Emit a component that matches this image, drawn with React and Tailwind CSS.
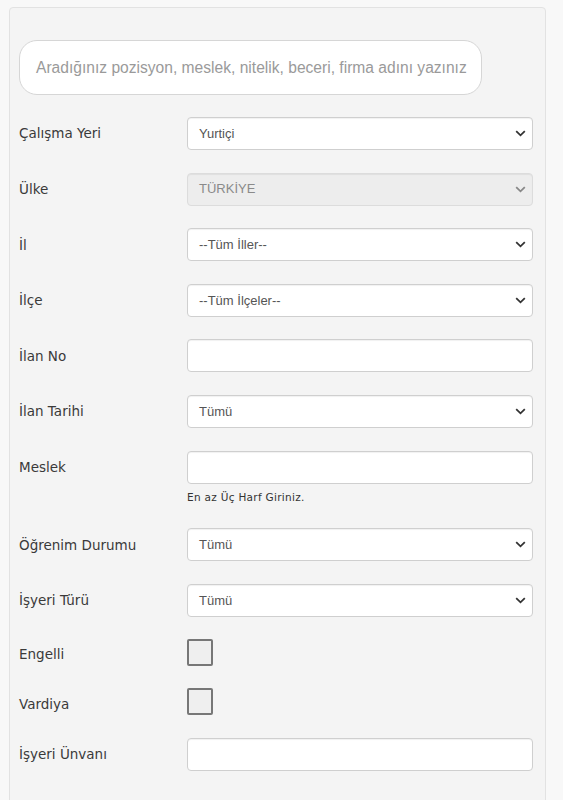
export default function App() {
  return (
    <div className="min-h-[800px] w-[563px] bg-[#f8f8f8] pl-[9px] pt-[7px] font-['Liberation_Sans',Arial,sans-serif]">
      <div className="w-[537px] min-h-[820px] rounded-t-[4px] border border-[#e2e2e2] bg-[#f4f4f4] pl-[9px] pr-[12px] pt-[32px]">
        <div className="flex h-[55px] w-[463px] items-center rounded-[18px] border border-[#d6d6d6] bg-white pl-[16px] text-[15.6px] text-[#9a9a9a]">
          Aradığınız pozisyon, meslek, nitelik, beceri, firma adını yazınız
        </div>

        <div className="mt-[22px] flex flex-col gap-[22.6px]">
          <Row label="Çalışma Yeri"><Select value="Yurtiçi" /></Row>
          <Row label="Ülke"><Select value="TÜRKİYE" disabled /></Row>
          <Row label="İl"><Select value="--Tüm İller--" /></Row>
          <Row label="İlçe"><Select value="--Tüm İlçeler--" /></Row>
          <Row label="İlan No"><TextBox /></Row>
          <Row label="İlan Tarihi"><Select value="Tümü" /></Row>
          <Row label="Meslek">
            <div>
              <TextBox />
              <p className="pt-[6px] pb-[2px] text-[10.5px] leading-[14px] tracking-[0.3px] text-[#333] font-['DejaVu_Sans',Verdana,sans-serif]">
                En az Üç Harf Giriniz.
              </p>
            </div>
          </Row>
          <Row label="Öğrenim Durumu"><Select value="Tümü" /></Row>
          <Row label="İşyeri Türü"><Select value="Tümü" /></Row>
          <Row label="Engelli" small><Check /></Row>
          <Row label="Vardiya" small><Check /></Row>
          <Row label="İşyeri Ünvanı"><TextBox /></Row>
        </div>
      </div>
    </div>
  );
}

function Row({ label, children, small }) {
  return (
    <div className="flex items-start">
      <div className={`flex w-[168px] shrink-0 items-center text-[13.5px] text-[#3a3a3a] font-['DejaVu_Sans',Verdana,sans-serif] ${small ? "h-[26.5px] pt-[4px]" : "h-[33px]"}`}>
        {label}
      </div>
      <div className="w-[346px]">{children}</div>
    </div>
  );
}

function Select({ value, disabled }) {
  return (
    <div
      className={`flex h-[33px] items-center justify-between rounded-[4px] border pl-[11px] pr-[6px] text-[13px] shadow-[inset_0_1px_1px_rgba(0,0,0,0.06)] ${
        disabled ? "border-[#dcdcdc] bg-[#ededed] text-[#8a8a8a]" : "border-[#cfcfcf] bg-white text-[#555]"
      }`}
    >
      <span>{value}</span>
      <svg width="11" height="7" viewBox="0 0 11 7" className={disabled ? "text-[#888]" : "text-[#333]"}>
        <path d="M1.2 1.2 L5.5 5.3 L9.8 1.2" fill="none" stroke="currentColor" strokeWidth="1.8" />
      </svg>
    </div>
  );
}

function TextBox() {
  return (
    <div className="h-[33px] rounded-[4px] border border-[#cfcfcf] bg-white shadow-[inset_0_1px_1px_rgba(0,0,0,0.06)]" />
  );
}

function Check() {
  return <div className="h-[26.5px] w-[26px] rounded-[2px] border-2 border-[#777] bg-[#efefef]" />;
}
